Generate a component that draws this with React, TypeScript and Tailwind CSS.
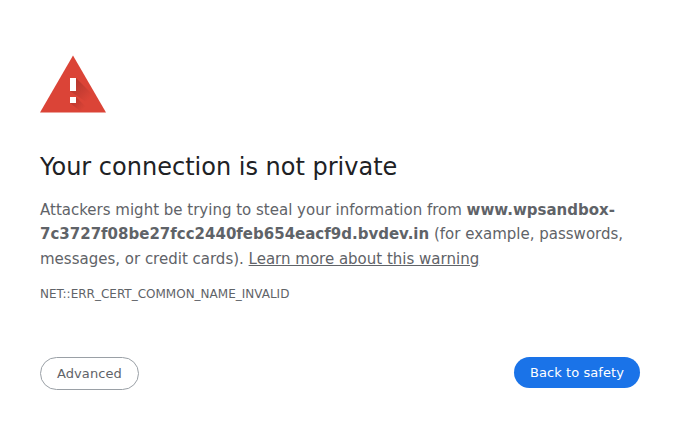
import React from 'react';

const WarningIcon = () => (
  <svg width="66" height="58" viewBox="0 0 66 58" className="block">
    <defs>
      <linearGradient id="warnShade" gradientUnits="userSpaceOnUse" x1="33" y1="30" x2="48" y2="45">
        <stop offset="0" stopColor="#a8322a" stopOpacity="0.7" />
        <stop offset="1" stopColor="#a8322a" stopOpacity="0" />
      </linearGradient>
      <linearGradient id="warnShadeDot" gradientUnits="userSpaceOnUse" x1="33" y1="45" x2="43" y2="55">
        <stop offset="0" stopColor="#a8322a" stopOpacity="0.6" />
        <stop offset="1" stopColor="#a8322a" stopOpacity="0" />
      </linearGradient>
    </defs>
    <path d="M33 0.5 L66 57.5 L0 57.5 Z" fill="#db4437" />
    <path d="M36 23 L60 47 L46 47 L30 36 Z" fill="url(#warnShade)" />
    <path d="M36 42 L48 54 L40 56 L30 48 Z" fill="url(#warnShadeDot)" />
    <rect x="30" y="23" width="6" height="13" fill="#fff" />
    <rect x="30" y="42" width="6" height="6" fill="#fff" />
  </svg>
);

const App: React.FC = () => {
  return (
    <div className="w-[680px] h-[446px] bg-white px-10 pt-[55px] font-['DejaVu_Sans',sans-serif] overflow-hidden">
      <WarningIcon />
      <h1 className="mt-[38px] text-[24px] leading-[32px] font-normal text-[#202124]">Your connection is not private</h1>
      <p className="mt-[14.6px] text-[15px] leading-[24.75px] text-[#5f6368]">
        Attackers might be trying to steal your information from <strong>www.wpsandbox-7c3727f08be27fcc2440feb654eacf9d.bvdev.in</strong> (for example, passwords, messages, or credit cards). <a className="underline">Learn more about this warning</a>
      </p>
      <div className="mt-[12.15px] text-[12px] leading-[20px] text-[#5f6368]">NET::ERR_CERT_COMMON_NAME_INVALID</div>
      <div className="mt-[53px] flex justify-between items-start">
        <button className="h-[33px] px-4 rounded-full border border-[#9aa0a6] bg-white text-[13px] tracking-[0.08px] text-[#5f6368]">Advanced</button>
        <button className="h-[31px] px-4 rounded-full bg-[#1a73e8] text-[13px] tracking-[0.08px] text-white">Back to safety</button>
      </div>
    </div>
  );
};

export default App;
